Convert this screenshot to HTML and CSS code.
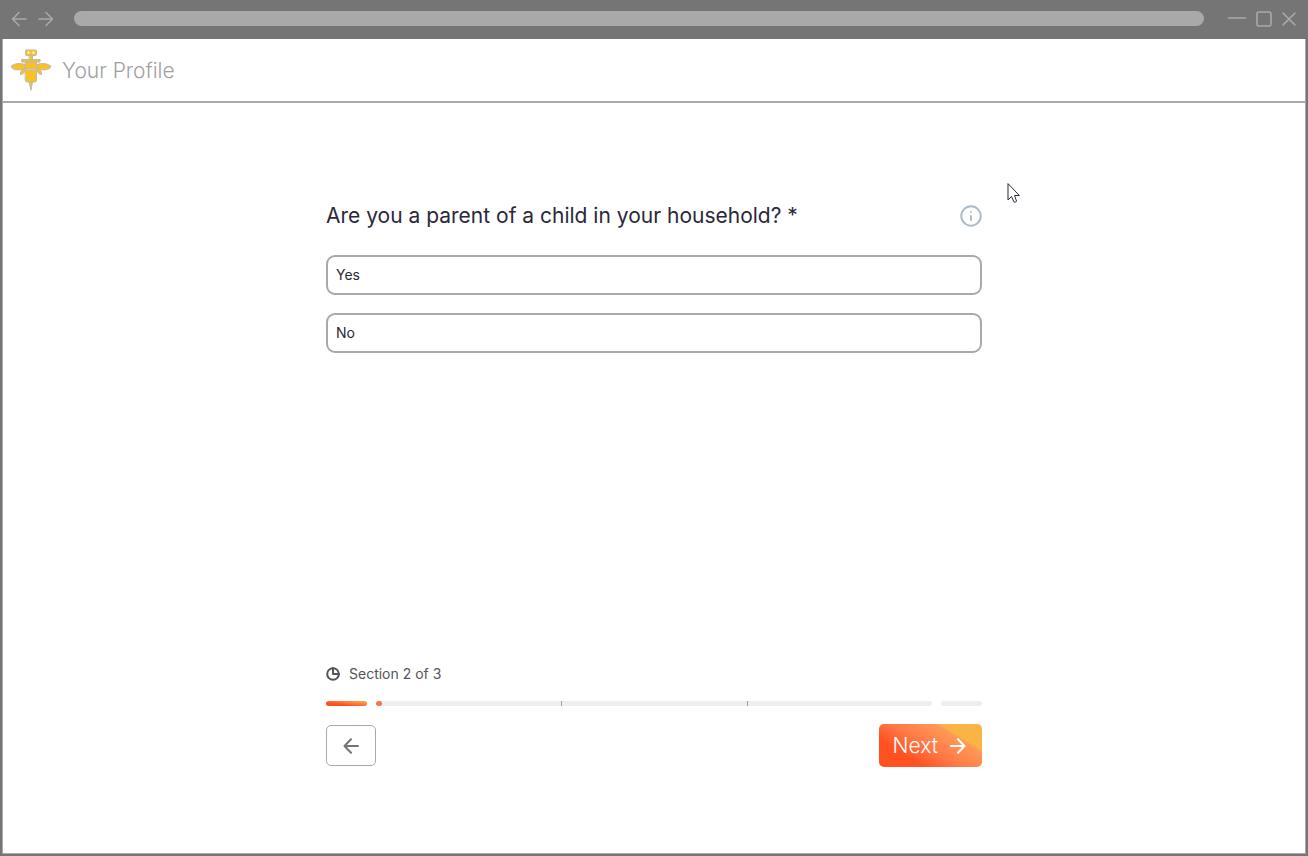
FILE: index.html
```html
<!DOCTYPE html>
<html lang="en">
<head>
<meta charset="utf-8">
<meta name="viewport" content="width=device-width, initial-scale=1">
<title>Your Profile</title>
<link rel="stylesheet" href="styles.css">
</head>
<body>
<div class="window">
  <div class="titlebar">
    <div class="nav">
      <button class="chrome-btn" type="button" aria-label="Back"><svg width="16" height="16" viewBox="0 0 16 16"><path d="M15 8H1.500M8 1.500 1.500 8 8 14.500"/></svg></button>
      <button class="chrome-btn" type="button" aria-label="Forward"><svg width="16" height="16" viewBox="0 0 16 16"><path d="M1 8h13.500M8 1.500 14.500 8 8 14.500"/></svg></button>
    </div>
    <input class="address" type="text" aria-label="Address">
    <div class="controls">
      <button class="chrome-btn" type="button" aria-label="Minimise"><svg width="20" height="16" viewBox="0 0 20 16"><path d="M1.500 7h17"/></svg></button>
      <button class="chrome-btn" type="button" aria-label="Maximise"><svg width="16" height="16" viewBox="0 0 16 16"><rect x="1" y="1" width="14" height="14" rx="2"/></svg></button>
      <button class="chrome-btn" type="button" aria-label="Close"><svg width="16" height="16" viewBox="0 0 16 16"><path d="M2 2l12 12M14 2 2 14"/></svg></button>
    </div>
  </div>

  <div class="page">
    <header class="header">
      <svg class="logo" width="42" height="42" viewBox="0 0 42 42" aria-hidden="true">
        <path d="M16 16C10 13 3 15 1 17.500c2 4 9 4.500 15 1.500zM26 16c6-3 13-1 15 1.500-2 4-9 4.500-15 1.500z"/>
        <path d="M16 18c-3 1-6 4-5.500 7.500 3 0 5-3 5.500-7.500zM26 18c3 1 6 4 5.500 7.500-3 0-5-3-5.500-7.500z"/>
        <path d="M19.500 6h3v5h-3z"/>
        <rect x="15.500" y="1" width="11" height="5.500" rx="1"/>
        <path d="M12 10.500h18v2.500H12zM15.500 13h11v7h-11zM15.500 21h11v11l-1.500 1h-8l-1.500-1zM19.500 33h3L21 41z"/>
        <circle class="eye" cx="18.500" cy="3.700" r="1.100"/><circle class="eye" cx="23.500" cy="3.700" r="1.100"/>
      </svg>
      <h1 class="title">Your Profile</h1>
    </header>

    <main class="form">
      <div class="question-row">
        <h2 class="question">Are you a parent of a child in your household? *</h2>
        <button class="info" type="button" aria-label="More information"><svg width="22" height="22" viewBox="0 0 22 22"><circle cx="11" cy="11" r="9.700"/><path d="M11 11v4M11 7v.1"/></svg></button>
      </div>
      <div class="options">
        <button class="option" type="button">Yes</button>
        <button class="option" type="button">No</button>
      </div>

      <footer class="footer">
        <div class="section">
          <svg width="14" height="14" viewBox="0 0 14 14" aria-hidden="true"><circle cx="7" cy="7" r="5.800"/><path d="M7 1v6h6"/></svg>
          <span>Section 2 of 3</span>
        </div>
        <div class="progress">
          <div class="bar bar-done"></div>
          <div class="bar bar-current"><i></i><i></i><i></i></div>
          <div class="bar"></div>
        </div>
        <div class="actions">
          <button class="back" type="button" aria-label="Previous question"><svg width="16" height="16" viewBox="0 0 16 16"><path d="M15 8H1.500M8 1.200 1.500 8 8 14.800"/></svg></button>
          <button class="next" type="button">Next<svg width="16" height="16" viewBox="0 0 16 16"><path d="M1 8h13.500M8 1.200 14.500 8 8 14.800"/></svg></button>
        </div>
      </footer>
    </main>
    <svg class="cursor" width="14" height="21" viewBox="0 0 14 21" aria-hidden="true"><path d="M1 1v16l3.500-3.500L7 19c1 .5 2.500 0 2.500-1L7.500 12.500H12z"/></svg>
  </div>
</div>
</body>
</html>
```
FILE: styles.css
```css
* { box-sizing: border-box; }

body {
  margin: 0;
  font-family: Inter, "Open Sans", sans-serif;
  color: #2b2838;
}

button { font: inherit; color: inherit; cursor: pointer; }

svg {
  display: block;
  fill: none;
  stroke: currentColor;
  stroke-width: 2;
  stroke-linecap: round;
  stroke-linejoin: round;
}

.window {
  display: flex;
  flex-direction: column;
  min-height: 100vh;
  padding: 0 2px 2px;
  background: #757575;
}

.titlebar {
  display: flex;
  align-items: center;
  height: 39px;
  padding: 0 9px 2px;
  color: #a9a9a9;
}

.titlebar svg { stroke-width: 1.6; }

.nav { display: flex; gap: 11px; }

.chrome-btn { padding: 0; border: 0; background: none; }

.address {
  flex: 1;
  min-width: 0;
  height: 15px;
  margin: 0 23px 0 20px;
  border: 0;
  border-radius: 8px;
  background: #a9a9a9;
}

.controls { display: flex; gap: 9px; }

.page {
  position: relative;
  flex: 1;
  display: flex;
  flex-direction: column;
  border: 1px solid #a9a9a9;
  border-top: 0;
  background: #fff;
}

.header {
  display: flex;
  align-items: center;
  gap: 10px;
  height: 64px;
  padding: 0 7px;
  border-bottom: 2px solid #a9a9a9;
}

.logo { fill: #f8c222; stroke: #bcb9b2; stroke-width: 1; }
.eye { fill: #fff; stroke: none; }

.title {
  margin: 0;
  padding-top: 2px;
  font-size: 21px;
  font-weight: 300;
  line-height: 28px;
  color: #a0a0a0;
}

.form {
  flex: 1;
  display: flex;
  flex-direction: column;
  width: 100%;
  max-width: 656px;
  margin: 0 auto;
  padding: 99px 0 86px;
}

.question-row {
  display: flex;
  align-items: center;
  justify-content: space-between;
  gap: 16px;
}

.question {
  margin: 0;
  font-size: 21px;
  font-weight: 400;
  line-height: 28px;
}

.info { padding: 0; border: 0; background: none; color: #acbac4; }

.options {
  display: flex;
  flex-direction: column;
  gap: 18px;
  margin-top: 25px;
}

.option {
  height: 40px;
  padding: 0 8px 2px;
  border: 2px solid #a9a9a9;
  border-radius: 9px;
  background: #fff;
  font-size: 14px;
  text-align: left;
}

.footer { margin-top: auto; }

.section {
  display: flex;
  align-items: center;
  gap: 9px;
  font-size: 14px;
  line-height: 20px;
  color: #55535c;
}

.progress {
  display: grid;
  grid-template-columns: 41px 1fr 41px;
  gap: 9px;
  margin: 17px 0 18px;
}

.bar { height: 5px; border-radius: 3px; background: #eee; }
.bar-done { background: linear-gradient(to top right, #fd4f20 30%, #fd7a3c 60%, #fbb045); }

.bar-current {
  display: grid;
  grid-template-columns: repeat(3, 1fr);
}
.bar-current i:first-child { width: 6px; border-radius: 3px; background: #fb7549; }
.bar-current i + i { border-left: 1px solid #a0a0a0; }

.actions { display: flex; align-items: center; justify-content: space-between; }

.back {
  display: grid;
  place-items: center;
  width: 50px;
  height: 41px;
  padding: 0;
  border: 1px solid #a9a9a9;
  border-radius: 5px;
  background: #fff;
  color: #757575;
}

.next {
  display: flex;
  align-items: center;
  gap: 12px;
  height: 43px;
  padding: 0 16px 0 14px;
  border: 0;
  border-radius: 5px;
  background:
    linear-gradient(212deg, #f9b444 24%, transparent 27%),
    linear-gradient(212deg, #fd9d58 24%, #ff7a48 52%, #ff5220 74%);
  font-size: 21px;
  font-weight: 300;
  color: #fff;
}

.cursor {
  position: absolute;
  top: 144px;
  left: calc(50% + 353px);
  fill: #fff;
  stroke: #2b2838;
  stroke-width: 1;
}
```
